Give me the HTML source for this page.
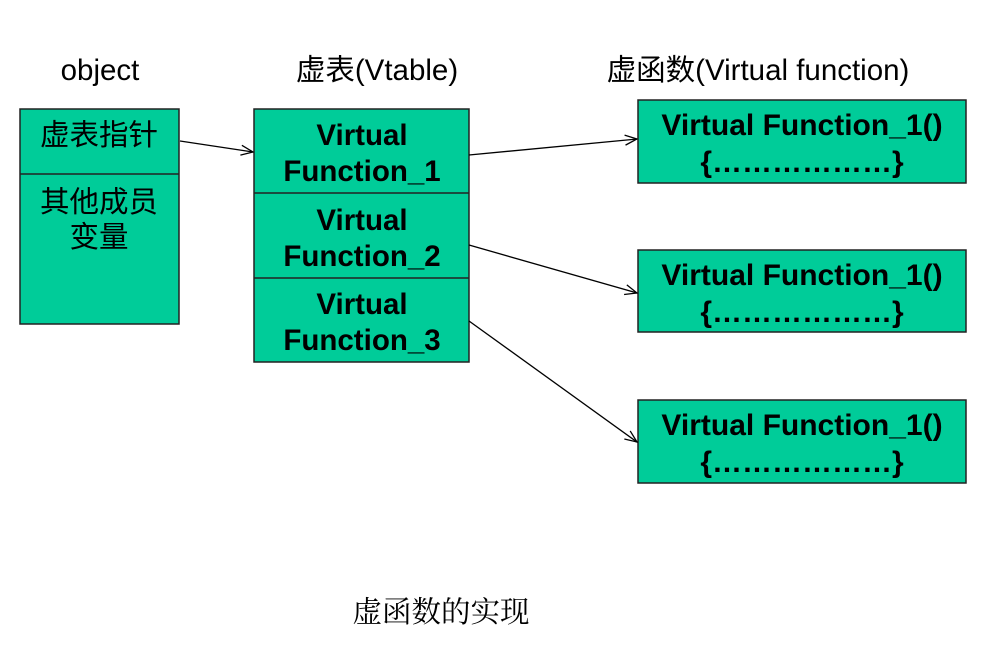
<!DOCTYPE html>
<html><head><meta charset="utf-8"><style>
body{margin:0;background:#fff;}
svg{display:block}
.t{font-family:"Liberation Sans","Noto Sans CJK SC",sans-serif;}
</style></head><body>
<svg width="988" height="671" viewBox="0 0 988 671" class="t">
<defs><marker id="a" markerWidth="14" markerHeight="12" refX="13" refY="6" orient="auto" markerUnits="userSpaceOnUse"><path d="M1,1 L13,6 L1,11" fill="none" stroke="#000" stroke-width="1.3"/></marker></defs>
<g fill="#00CC99" stroke="#222" stroke-width="1.5">
<rect x="20" y="109" width="159" height="215"/>
<line x1="20" y1="174" x2="179" y2="174"/>
<rect x="254" y="109" width="215" height="253"/>
<line x1="254" y1="193" x2="469" y2="193"/>
<line x1="254" y1="278" x2="469" y2="278"/>
<rect x="638" y="100" width="328" height="83"/>
<rect x="638" y="250" width="328" height="82"/>
<rect x="638" y="400" width="328" height="83"/>
</g>
<g stroke="#000" stroke-width="1.3" fill="none">
<line x1="180" y1="141" x2="253" y2="152" marker-end="url(#a)"/>
<line x1="469" y1="155" x2="637" y2="139" marker-end="url(#a)"/>
<line x1="469" y1="245" x2="637" y2="293" marker-end="url(#a)"/>
<line x1="469" y1="321" x2="637" y2="442" marker-end="url(#a)"/>
</g>
<g font-size="29.5" text-anchor="middle">
<text x="100" y="80">object</text>
<text x="377" y="80">虚表(Vtable)</text>
<text x="758" y="80">虚函数(Virtual function)</text>
<text x="99" y="145">虚表指针</text>
<text x="99" y="212">其他成员</text>
<text x="99" y="247">变量</text>
</g>
<g font-size="29.5" font-weight="bold" text-anchor="middle">
<text x="362" y="145">Virtual</text>
<text x="362" y="181">Function_1</text>
<text x="362" y="230">Virtual</text>
<text x="362" y="266">Function_2</text>
<text x="362" y="314">Virtual</text>
<text x="362" y="350">Function_3</text>
<text x="802" y="135" font-size="30">Virtual Function_1()</text>
<text x="802" y="172" font-size="30">{………………}</text>
<text x="802" y="285" font-size="30">Virtual Function_1()</text>
<text x="802" y="322" font-size="30">{………………}</text>
<text x="802" y="435" font-size="30">Virtual Function_1()</text>
<text x="802" y="472" font-size="30">{………………}</text>
</g>
<text x="441" y="622" font-size="29.5" text-anchor="middle" font-family="'Noto Serif CJK SC',serif">虚函数的实现</text>
</svg>
</body></html>
